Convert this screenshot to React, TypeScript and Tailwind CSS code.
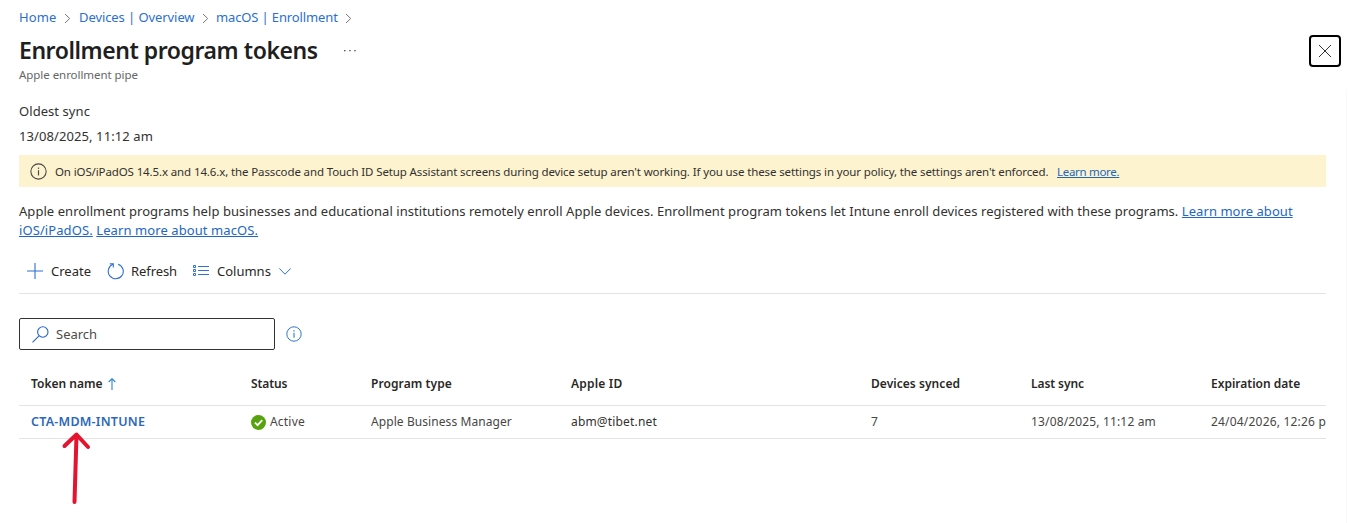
import type { ReactNode } from "react";

function Separator() {
  return (
    <svg className="h-[11px] w-[7px] shrink-0" viewBox="0 0 7 11" fill="none" stroke="#777" strokeWidth="1">
      <path d="M1 1L5.7 5.5L1 10" />
    </svg>
  );
}

function InfoIcon({ className }: { className: string }) {
  return (
    <svg className={className} viewBox="0 0 16 16" fill="none" stroke="currentColor">
      <circle cx="8" cy="8" r="7.2" strokeWidth="1" />
      <path d="M8 6.8V11.7" strokeWidth="1.1" />
      <path d="M8 4.3V5.5" strokeWidth="1.2" />
    </svg>
  );
}

function TextLink({ children, className = "" }: { children: ReactNode; className?: string }) {
  return (
    <a href="#" className={`text-[#2267bf] underline underline-offset-1 ${className}`}>
      {children}
    </a>
  );
}

function Breadcrumb() {
  return (
    <nav className="flex h-9 items-center text-[13px] text-[#2b6fd0]">
      <a href="#" className="w-[45px] tracking-[0.15px]">Home</a>
      <Separator />
      <a href="#" className="ml-2 w-[123px] tracking-[-0.08px]">Devices | Overview</a>
      <Separator />
      <a href="#" className="ml-[7px] w-[129px] tracking-[-0.13px]">macOS | Enrollment</a>
      <Separator />
    </nav>
  );
}

function Header() {
  return (
    <header className="flex h-12 justify-between">
      <div className="-mt-0.5">
        <div className="flex h-[33px] items-center">
          <h1 className="w-[325px] text-[23px] leading-[33px] font-semibold tracking-[-0.45px] text-[#1f1f1f]">
            Enrollment program tokens
          </h1>
          <svg className="h-[3px] w-[12px]" viewBox="0 0 12 3" fill="#555">
            <path d="M0 1h1.5v1.3H0zM5.2 1h1.5v1.3H5.2zM10.2 1h1.5v1.3h-1.5z" />
          </svg>
        </div>
        <p className="text-[11.5px] leading-[16px] tracking-[-0.05px] text-[#666]">Apple enrollment pipe</p>
      </div>
      <button aria-label="Close" className="-mt-px flex size-8 items-center justify-center rounded-[4px] border-2 border-black">
        <svg className="size-[12px]" viewBox="0 0 12 12" stroke="#333" strokeWidth="1">
          <path d="M0 0L12 12M12 0L0 12" />
        </svg>
      </button>
    </header>
  );
}

function Toolbar() {
  return (
    <div className="flex h-[45px] items-center border-b border-[#e3e3e3] pl-2 text-[13px] text-[#292827]">
      <button className="flex w-[80px] items-center">
        <svg className="mr-2 size-4" viewBox="0 0 16 16" stroke="#2f6fd4" strokeWidth="1.1">
          <path d="M8 0V16M0 8H16" />
        </svg>
        <span className="pt-0.5">Create</span>
      </button>
      <button className="flex w-[86px] items-center">
        <svg className="mr-[7px] size-[17px]" viewBox="0 0 17 17" fill="none" stroke="#2f6fd4" strokeWidth="1.1">
          <path d="M11.2 1.2A7.5 7.5 0 1 1 6 1.3" />
          <path d="M2.8 0.9H6.3V4.6" />
        </svg>
        <span className="pt-0.5 tracking-[-0.08px]">Refresh</span>
      </button>
      <button className="flex items-center">
        <svg className="mr-2 mb-px h-[11px] w-4" viewBox="0 0 16 11" fill="none" stroke="#2f6fd4" strokeWidth="1">
          <path d="M5 1.5H16M5 5.5H16M5 9.5H16" />
          <path d="M0.5 0.5h2v2h-2zM0.5 4.5h2v2h-2zM0.5 8.5h2v2h-2z" />
        </svg>
        <span className="w-[62px] pt-0.5 text-left">Columns</span>
        <svg className="h-[7px] w-[12px]" viewBox="0 0 12 7" fill="none" stroke="#2f6fd4" strokeWidth="1">
          <path d="M0.3 0.4L6 6.2L11.7 0.4" />
        </svg>
      </button>
    </div>
  );
}

function SearchRow() {
  return (
    <div className="mt-6 flex h-8 items-center">
      <div className="flex h-8 w-64 items-center rounded-[2px] border border-[#333] pl-3">
        <svg className="mr-[7px] size-[17px]" viewBox="0 0 17 17" fill="none" stroke="#2267c9" strokeWidth="1.1">
          <circle cx="10.8" cy="6" r="5.2" />
          <path d="M7 9.8L0.5 16.3" />
        </svg>
        <span className="pt-px text-[13px] text-[#4d4b49]">Search</span>
      </div>
      <InfoIcon className="ml-[11px] size-4 text-[#2f78cc]" />
    </div>
  );
}

const GRID =
  "grid grid-cols-[220px_120px_200px_300px_160px_180px_115px] items-center overflow-hidden border-b border-[#e3e3e3] pl-3 text-[12px] whitespace-nowrap";

function TokenTable() {
  return (
    <div className="mt-[13px]">
      <div className={`${GRID} h-[43px] font-semibold text-[#292827]`}>
        <span className="flex items-center">
          Token name
          <svg className="ml-[6px] h-[12px] w-[8px]" viewBox="0 0 8 12" fill="none" stroke="#2f83cf" strokeWidth="1.1">
            <path d="M4 12V0.8M0.7 4L4 0.7L7.3 4" />
          </svg>
        </span>
        <span className="tracking-[-0.1px]">Status</span>
        <span className="tracking-[0.09px]">Program type</span>
        <span className="tracking-[0.2px]">Apple ID</span>
        <span className="tracking-[0.05px]">Devices synced</span>
        <span className="tracking-[-0.08px]">Last sync</span>
        <span>Expiration date</span>
      </div>
      <div className={`${GRID} h-[33px] text-[#484644]`}>
        <a href="#" className="text-[12.5px] font-semibold tracking-[0.23px] text-[#2b68ba]">CTA-MDM-INTUNE</a>
        <span className="flex items-center tracking-[0.2px]">
          <svg className="mr-1 size-[15px]" viewBox="0 0 15 15" fill="none">
            <circle cx="7.5" cy="7.5" r="7.5" fill="#57a30d" />
            <path d="M4 7.7L6.6 10.2L11.2 5.1" stroke="#fff" strokeWidth="1.8" />
          </svg>
          Active
        </span>
        <span className="tracking-[0.08px]">Apple Business Manager</span>
        <span className="tracking-[0.17px] text-[#323130]">abm@tibet.net</span>
        <span>7</span>
        <span className="tracking-[0.15px]">13/08/2025, 11:12 am</span>
        <span className="overflow-hidden tracking-[0.19px]">24/04/2026, 12:26 p</span>
      </div>
    </div>
  );
}

function PointerArrow() {
  return (
    <svg
      className="pointer-events-none absolute top-[430px] left-[60px] h-[76px] w-[32px]"
      viewBox="0 0 32 76"
      fill="none"
      stroke="#e4132f"
      strokeWidth="4"
      strokeLinecap="round"
      strokeLinejoin="round"
    >
      <path d="M14.5 72L16.5 5M4.5 16L16.5 4.5L28 17" />
    </svg>
  );
}

export default function App() {
  return (
    <div className="relative flex h-[523px] w-[1348px] flex-col overflow-hidden bg-white font-['Noto_Sans','Open_Sans',sans-serif]">
      <div className="pr-[7px] pl-[19px]">
        <Breadcrumb />
        <Header />
      </div>
      <main className="mt-[6px] mr-px flex-1 border-r border-[#f8f8f8] pr-[20px] pl-[19px] text-[#323130]">
        <section className="pt-[9px] text-[13px] leading-[25px]">
          <p className="tracking-[0.06px]">Oldest sync</p>
          <p className="tracking-[0.09px]">13/08/2025, 11:12 am</p>
        </section>
        <div className="mt-[6px] flex h-8 items-center bg-[#fdf3cf] pl-[11px] text-[11.5px] whitespace-nowrap">
          <InfoIcon className="mr-2 size-[17px] text-[#484644]" />
          <span className="w-[1002px] pt-px tracking-[-0.121px]">
            On iOS/iPadOS 14.5.x and 14.6.x, the Passcode and Touch ID Setup Assistant screens during device setup
            aren't working. If you use these settings in your policy, the settings aren't enforced.
          </span>
          <TextLink className="pt-px tracking-[-0.3px]">Learn more.</TextLink>
        </div>
        <div className="mt-[15px] text-[13px] leading-[19px] whitespace-nowrap">
          <p className="tracking-[0.054px]">
            Apple enrollment programs help businesses and educational institutions remotely enroll Apple devices.
            Enrollment program tokens let Intune enroll devices registered with these programs.{" "}
            <TextLink>Learn more about</TextLink>
          </p>
          <p className="tracking-[0.09px]">
            <TextLink>iOS/iPadOS.</TextLink> <TextLink>Learn more about macOS.</TextLink>
          </p>
        </div>
        <div className="mt-[9px]">
          <Toolbar />
        </div>
        <SearchRow />
        <TokenTable />
      </main>
      <PointerArrow />
    </div>
  );
}
